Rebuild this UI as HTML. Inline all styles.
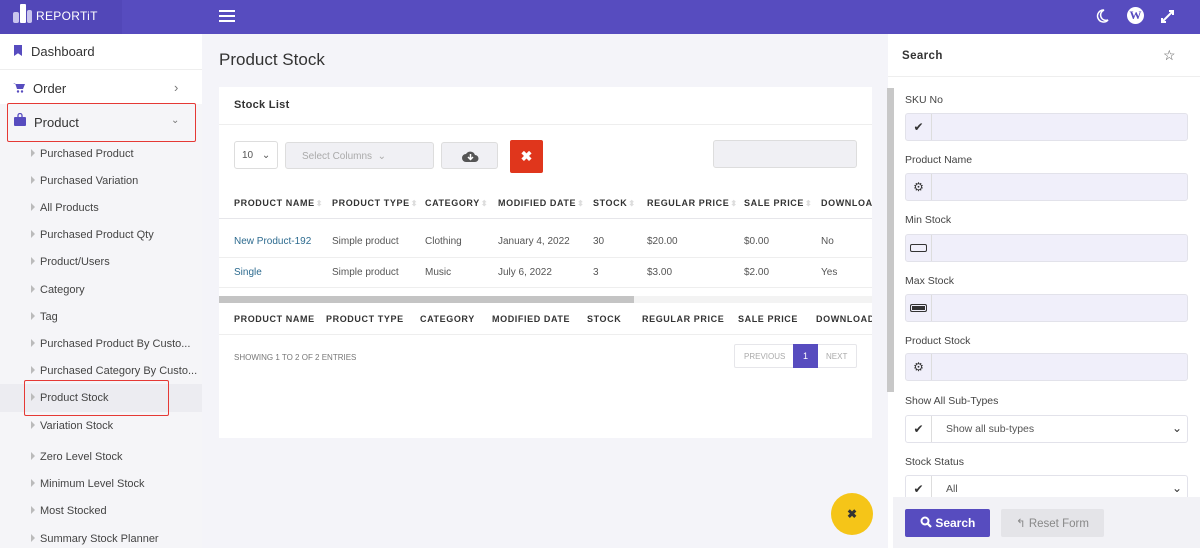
<!DOCTYPE html>
<html><head><meta charset="utf-8"><style>
*{box-sizing:border-box;margin:0;padding:0}
body{width:1200px;height:548px;overflow:hidden;font-family:"Liberation Sans",sans-serif;background:#f4f4f9;position:relative;color:#333}
.abs{position:absolute}
.top{left:0;top:0;width:1200px;height:34px;background:#574cbf}
.logo{left:0;top:0;width:122px;height:34px;background:#5247b8}
.side{left:0;top:34px;width:202px;height:514px;background:#f5f5f8}
.wrow{left:0;width:202px;height:35px;background:#fff;font-size:13px;color:#333}
.sub{left:40px;font-size:11px;color:#444}
.tri{left:31px;width:0;height:0;border-left:4px solid #bbb;border-top:4px solid transparent;border-bottom:4px solid transparent}
.card{left:219px;top:87px;width:653px;height:351px;background:#fff}
.hd{font-size:9px;font-weight:bold;letter-spacing:.6px;color:#333;white-space:nowrap}
.s{color:#ddd;font-size:8px;margin-left:1px}
.cell{font-size:10px;color:#555}
.lbl{left:905px;font-size:10.5px;color:#444}
.inp{left:905px;width:283px;height:28px;background:#f0effa;border:1px solid #e2e2ea;border-radius:3px}
.inp .ic{position:absolute;left:0;top:0;width:26px;height:26px;border-right:1px solid #ddd;display:flex;align-items:center;justify-content:center;font-size:12px;color:#333}
</style></head><body>
<div class="abs top"></div>
<div class="abs logo"></div>
<div class="abs" style="left:13px;top:12px;width:6px;height:11px;background:#c9c5ee;border-radius:2px"></div>
<div class="abs" style="left:20px;top:4px;width:6px;height:19px;background:#fff;border-radius:1px"></div>
<div class="abs" style="left:27px;top:10px;width:5px;height:13px;background:#c9c5ee;border-radius:2px"></div>
<div class="abs" style="left:36px;top:9px;font-size:12px;color:#fff;letter-spacing:.3px">REPORTiT</div>
<div class="abs" style="left:219px;top:10px;width:16px;height:2px;background:#fff;box-shadow:0 5px 0 #fff,0 10px 0 #fff"></div>
<svg class="abs" style="left:1094px;top:8px" width="16" height="16" viewBox="0 0 16 16"><path d="M10 2a6 6 0 1 0 4 10A5 5 0 0 1 10 2z" fill="none" stroke="#fff" stroke-width="1.5"/></svg>
<div class="abs" style="left:1127px;top:7px;width:17px;height:17px;border-radius:50%;background:#fff;color:#574cbf;font:bold 12px 'Liberation Serif',serif;text-align:center;line-height:17px">W</div>
<svg class="abs" style="left:1160px;top:9px" width="15" height="15" viewBox="0 0 15 15"><path d="M2 13L13 2M9 2h4v4M2 9v4h4" fill="none" stroke="#fff" stroke-width="2"/></svg>

<div class="abs side"></div>
<div class="abs wrow" style="top:34px"><span class="abs" style="left:14px;top:11px;width:8px;height:11px;background:#574cbf;clip-path:polygon(0 0,100% 0,100% 100%,50% 75%,0 100%)"></span><span class="abs" style="left:31px;top:10px">Dashboard</span></div>
<div class="abs wrow" style="top:69px;border-top:1px solid #eee"><svg class="abs" style="left:13px;top:12px" width="12" height="11" viewBox="0 0 12 11"><path d="M0 1h2l2 6h6l2-5H3" fill="#574cbf"/><circle cx="5" cy="9.5" r="1.2" fill="#574cbf"/><circle cx="9" cy="9.5" r="1.2" fill="#574cbf"/></svg><span class="abs" style="left:33px;top:11px">Order</span><span class="abs" style="left:174px;top:10px;color:#777">›</span></div>
<div class="abs" style="left:7px;top:103px;width:189px;height:39px;border:1px solid #e53935;border-radius:2px"></div>
<svg class="abs" style="left:14px;top:113px" width="12" height="13" viewBox="0 0 12 13"><path d="M4 4V2.5a2 2 0 0 1 4 0V4" fill="none" stroke="#574cbf" stroke-width="1.3"/><rect x="0" y="4" width="12" height="9" rx="1" fill="#574cbf"/></svg>
<span class="abs" style="left:34px;top:115px;font-size:13px">Product</span>
<span class="abs" style="left:171px;top:115px;font-size:10px;color:#777">⌄</span>
<div class="abs" style="left:0;top:384px;width:202px;height:28px;background:#ececf1"></div>
<div class="abs" style="left:24px;top:380px;width:145px;height:36px;border:1px solid #e53935;border-radius:2px"></div>
<div class="abs tri" style="top:149px"></div><div class="abs sub" style="top:148px">Purchased Product</div>
<div class="abs tri" style="top:176px"></div><div class="abs sub" style="top:175px">Purchased Variation</div>
<div class="abs tri" style="top:203px"></div><div class="abs sub" style="top:202px">All Products</div>
<div class="abs tri" style="top:230px"></div><div class="abs sub" style="top:229px">Purchased Product Qty</div>
<div class="abs tri" style="top:257px"></div><div class="abs sub" style="top:256px">Product/Users</div>
<div class="abs tri" style="top:285px"></div><div class="abs sub" style="top:284px">Category</div>
<div class="abs tri" style="top:312px"></div><div class="abs sub" style="top:311px">Tag</div>
<div class="abs tri" style="top:339px"></div><div class="abs sub" style="top:338px">Purchased Product By Custo...</div>
<div class="abs tri" style="top:366px"></div><div class="abs sub" style="top:365px">Purchased Category By Custo...</div>
<div class="abs tri" style="top:393px"></div><div class="abs sub" style="top:392px">Product Stock</div>
<div class="abs tri" style="top:421px"></div><div class="abs sub" style="top:420px">Variation Stock</div>
<div class="abs tri" style="top:452px"></div><div class="abs sub" style="top:451px">Zero Level Stock</div>
<div class="abs tri" style="top:479px"></div><div class="abs sub" style="top:478px">Minimum Level Stock</div>
<div class="abs tri" style="top:506px"></div><div class="abs sub" style="top:505px">Most Stocked</div>
<div class="abs tri" style="top:534px"></div><div class="abs sub" style="top:533px">Summary Stock Planner</div>

<div class="abs" style="left:219px;top:50px;font-size:17px;color:#333">Product Stock</div>
<div class="abs card"></div>
<div class="abs" style="left:219px;top:124px;width:653px;height:1px;background:#eee"></div>
<div class="abs" style="left:234px;top:99px;font-size:11px;font-weight:bold;letter-spacing:.3px">Stock List</div>
<div class="abs" style="left:234px;top:141px;width:44px;height:28px;border:1px solid #ddd;border-radius:3px;font-size:10px;color:#555;padding:8px 0 0 7px">10 <span style="margin-left:6px">⌄</span></div>
<div class="abs" style="left:285px;top:142px;width:149px;height:27px;background:#f0f0f4;border:1px solid #ddd;border-radius:3px;font-size:10px;color:#aaa;padding:8px 0 0 16px">Select Columns &nbsp;⌄</div>
<div class="abs" style="left:441px;top:142px;width:57px;height:27px;background:#f0f0f4;border:1px solid #ddd;border-radius:3px"><svg style="position:absolute;left:20px;top:7px" width="17" height="13" viewBox="0 0 17 13"><path d="M4 12a4 4 0 0 1 0-8 5 5 0 0 1 9 1 3.5 3.5 0 0 1 0 7z" fill="#555"/><path d="M8.5 4v5M6 7l2.5 2.5L11 7" stroke="#fff" stroke-width="1.5" fill="none"/></svg></div>
<div class="abs" style="left:510px;top:140px;width:33px;height:33px;background:#e0361c;border-radius:2px;color:#fff;font-weight:bold;font-size:14px;text-align:center;line-height:33px">✖</div>
<div class="abs" style="left:713px;top:140px;width:144px;height:28px;background:#f0f0f4;border:1px solid #ddd;border-radius:3px"></div>

<div class="abs hd" style="left:234px;top:198px">PRODUCT NAME<span class="s">⬍</span></div>
<div class="abs hd" style="left:332px;top:198px">PRODUCT TYPE<span class="s">⬍</span></div>
<div class="abs hd" style="left:425px;top:198px">CATEGORY<span class="s">⬍</span></div>
<div class="abs hd" style="left:498px;top:198px">MODIFIED DATE<span class="s">⬍</span></div>
<div class="abs hd" style="left:593px;top:198px">STOCK<span class="s">⬍</span></div>
<div class="abs hd" style="left:647px;top:198px">REGULAR PRICE<span class="s">⬍</span></div>
<div class="abs hd" style="left:744px;top:198px">SALE PRICE<span class="s">⬍</span></div>
<div class="abs hd" style="left:821px;top:198px;width:51px;overflow:hidden">DOWNLOADABLE</div>
<div class="abs" style="left:219px;top:218px;width:653px;height:1px;background:#e6e6ea"></div>
<div class="abs cell" style="left:234px;top:236px;color:#2d6b8f">New Product-192</div>
<div class="abs cell" style="left:332px;top:236px">Simple product</div>
<div class="abs cell" style="left:425px;top:236px">Clothing</div>
<div class="abs cell" style="left:498px;top:236px">January 4, 2022</div>
<div class="abs cell" style="left:593px;top:236px">30</div>
<div class="abs cell" style="left:647px;top:236px">$20.00</div>
<div class="abs cell" style="left:744px;top:236px">$0.00</div>
<div class="abs cell" style="left:821px;top:236px">No</div>
<div class="abs" style="left:219px;top:257px;width:653px;height:1px;background:#eee"></div>
<div class="abs cell" style="left:234px;top:267px;color:#2d6b8f">Single</div>
<div class="abs cell" style="left:332px;top:267px">Simple product</div>
<div class="abs cell" style="left:425px;top:267px">Music</div>
<div class="abs cell" style="left:498px;top:267px">July 6, 2022</div>
<div class="abs cell" style="left:593px;top:267px">3</div>
<div class="abs cell" style="left:647px;top:267px">$3.00</div>
<div class="abs cell" style="left:744px;top:267px">$2.00</div>
<div class="abs cell" style="left:821px;top:267px">Yes</div>
<div class="abs" style="left:219px;top:287px;width:653px;height:1px;background:#eee"></div>
<div class="abs" style="left:219px;top:296px;width:653px;height:7px;background:#f3f3f3"></div>
<div class="abs" style="left:219px;top:296px;width:415px;height:7px;background:#c4c4c4"></div>
<div class="abs hd" style="left:234px;top:314px">PRODUCT NAME</div>
<div class="abs hd" style="left:326px;top:314px">PRODUCT TYPE</div>
<div class="abs hd" style="left:420px;top:314px">CATEGORY</div>
<div class="abs hd" style="left:492px;top:314px">MODIFIED DATE</div>
<div class="abs hd" style="left:587px;top:314px">STOCK</div>
<div class="abs hd" style="left:642px;top:314px">REGULAR PRICE</div>
<div class="abs hd" style="left:738px;top:314px">SALE PRICE</div>
<div class="abs hd" style="left:816px;top:314px;width:56px;overflow:hidden">DOWNLOADABLE</div>
<div class="abs" style="left:219px;top:334px;width:653px;height:1px;background:#eee"></div>
<div class="abs" style="left:234px;top:353px;font-size:8px;color:#777">SHOWING 1 TO 2 OF 2 ENTRIES</div>
<div class="abs" style="left:734px;top:344px;width:123px;height:24px;border:1px solid #e6e6ea;border-radius:2px;font-size:8px;color:#aaa"><span class="abs" style="left:9px;top:7px">PREVIOUS</span><span class="abs" style="left:58px;top:-1px;width:25px;height:24px;background:#574cbf;color:#fff;text-align:center;line-height:24px;font-size:9px">1</span><span class="abs" style="left:91px;top:7px">NEXT</span></div>
<div class="abs" style="left:831px;top:493px;width:42px;height:42px;border-radius:50%;background:#f5c518;text-align:center;line-height:42px;font-size:12px;font-weight:bold;color:#333">✖</div>

<div class="abs" style="left:888px;top:34px;width:312px;height:514px;background:#fff"></div>
<div class="abs" style="left:888px;top:76px;width:312px;height:1px;background:#eee"></div>
<div class="abs" style="left:887px;top:88px;width:7px;height:304px;background:#c8c8c8"></div>
<div class="abs" style="left:902px;top:50px;font-size:11.5px;font-weight:bold;letter-spacing:.4px">Search</div>
<div class="abs" style="left:1163px;top:47px;font-size:14px;color:#555">☆</div>
<div class="abs lbl" style="top:94px">SKU No</div>
<div class="abs inp" style="top:113px"><div class="ic">✔</div></div>
<div class="abs lbl" style="top:154px">Product Name</div>
<div class="abs inp" style="top:173px"><div class="ic">⚙</div></div>
<div class="abs lbl" style="top:214px">Min Stock</div>
<div class="abs inp" style="top:234px"><div class="ic"><span style="width:17px;height:8px;border:1.5px solid #333;border-radius:2px"></span></div></div>
<div class="abs lbl" style="top:275px">Max Stock</div>
<div class="abs inp" style="top:294px"><div class="ic"><span style="width:17px;height:8px;border:1.5px solid #333;border-radius:2px;background:#333;box-shadow:inset 0 0 0 1px #f0effa"></span></div></div>
<div class="abs lbl" style="top:335px">Product Stock</div>
<div class="abs inp" style="top:353px"><div class="ic">⚙</div></div>
<div class="abs lbl" style="top:395px">Show All Sub-Types</div>
<div class="abs inp" style="top:415px;background:#fff"><div class="ic">✔</div><span class="abs" style="left:40px;top:7px;font-size:10.5px;color:#555">Show all sub-types</span><span class="abs" style="left:266px;top:5px;font-size:12px">⌄</span></div>
<div class="abs lbl" style="top:456px">Stock Status</div>
<div class="abs inp" style="top:475px;background:#fff"><div class="ic">✔</div><span class="abs" style="left:40px;top:7px;font-size:10.5px;color:#555">All</span><span class="abs" style="left:266px;top:5px;font-size:12px">⌄</span></div>
<div class="abs" style="left:893px;top:497px;width:307px;height:51px;background:#f2f2f6"></div>
<div class="abs" style="left:905px;top:509px;width:85px;height:28px;background:#574cbf;border-radius:2px;color:#fff;font-size:12px;font-weight:bold;padding:7px 0 0 15px"><svg width="12" height="12" viewBox="0 0 12 12" style="vertical-align:-1px"><circle cx="5" cy="5" r="3.5" fill="none" stroke="#fff" stroke-width="2"/><path d="M7.5 7.5L11 11" stroke="#fff" stroke-width="2.2"/></svg> Search</div>
<div class="abs" style="left:1001px;top:509px;width:103px;height:28px;background:#e4e4e8;border-radius:2px;color:#888;font-size:11.5px;padding:7px 0 0 15px">↰ Reset Form</div>
</body></html>
